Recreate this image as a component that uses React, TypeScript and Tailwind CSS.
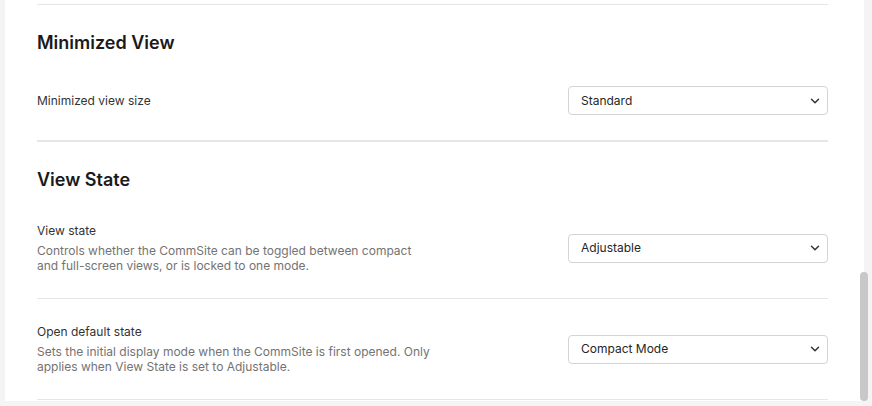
import { ChevronDown } from 'lucide-react'

interface SettingRowProps {
  label: string
  description?: string
  value: string
  last?: boolean
}

function SelectBox({ value }: { value: string }): JSX.Element {
  return (
    <div className="w-[260px] h-[29px] shrink-0 flex items-center justify-between rounded-[4px] border border-[#d4d4d4] bg-white pl-3 pr-[5px]">
      <span className="text-[12px] text-[#262626]">{value}</span>
      <ChevronDown className="w-3.5 h-3.5 text-[#333]" strokeWidth={2.5} />
    </div>
  )
}

function SettingRow({ label, description, value, last }: SettingRowProps): JSX.Element {
  return (
    <div className={`flex items-center justify-between py-[25px] ${last ? '' : 'border-b border-[#e6e6e6]'}`}>
      <div className="max-w-[396px]">
        <p className="text-[12px] leading-4 text-[#333]">{label}</p>
        {description && (
          <p className="mt-1 text-[12px] leading-[15px] text-[#737373]">{description}</p>
        )}
      </div>
      <SelectBox value={value} />
    </div>
  )
}

function Section({ title, children }: { title: string; children: React.ReactNode }): JSX.Element {
  return (
    <section className="border-t border-[#e6e6e6]">
      <h2 className="pt-6 pb-1 text-[18px] leading-7 font-semibold text-[#1a1a1a]">{title}</h2>
      {children}
    </section>
  )
}

export default function App(): JSX.Element {
  return (
    <div
      className="w-[872px] h-[406px] bg-[#f4f4f4] overflow-hidden"
      style={{ fontFamily: 'Inter, "Noto Sans", sans-serif' }}
    >
      <div className="relative ml-[5px] w-[863px] h-[401px] bg-white">
        <div className="pl-[32px] w-[823px] pt-[4px]">
          <Section title="Minimized View">
            <SettingRow label="Minimized view size" value="Standard" />
          </Section>
          <Section title="View State">
            <SettingRow
              label="View state"
              description="Controls whether the CommSite can be toggled between compact and full-screen views, or is locked to one mode."
              value="Adjustable"
            />
            <SettingRow
              label="Open default state"
              description="Sets the initial display mode when the CommSite is first opened. Only applies when View State is set to Adjustable."
              value="Compact Mode"
            />
          </Section>
        </div>
        <div className="absolute right-0 top-0 h-full w-[4px] bg-[#f4f4f4]" />
        <div className="absolute left-[855px] top-[272px] w-[8px] h-[129px] rounded-full bg-[#c8c8c8]" />
      </div>
    </div>
  )
}
